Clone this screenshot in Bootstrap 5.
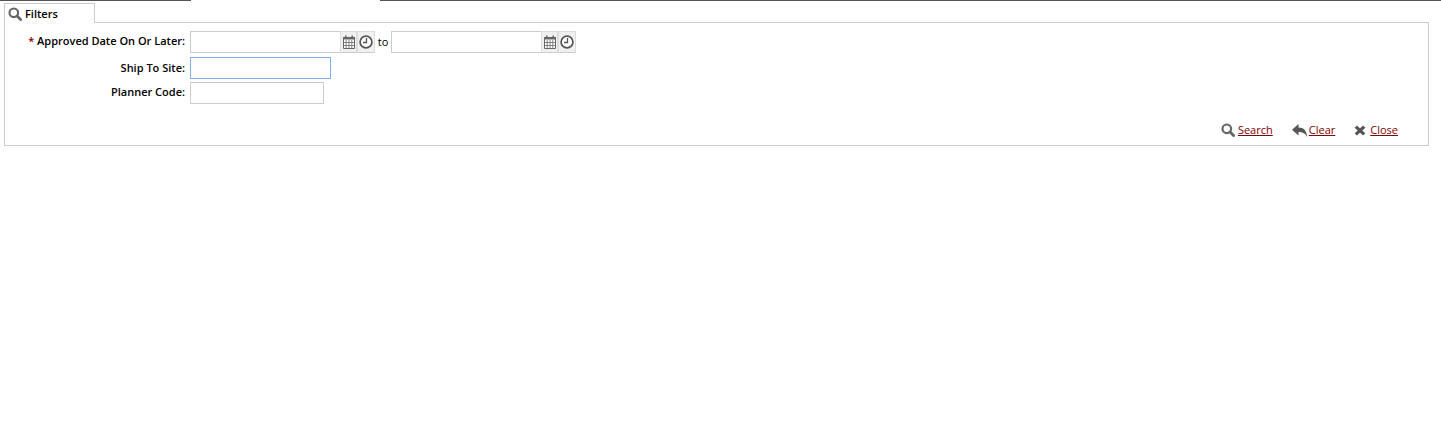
<!DOCTYPE html>
<html lang="en">
<head>
    <meta charset="UTF-8">
    <meta name="viewport" content="width=device-width, initial-scale=1.0">
    <title>Filters</title>
    <link href="https://cdn.jsdelivr.net/npm/bootstrap@5.3.0/dist/css/bootstrap.min.css" rel="stylesheet">
    <style>
        body {
            font-family: "Open Sans", "Liberation Sans", sans-serif;
            font-size: 11px;
            color: #000;
            background: #fff;
        }
        .top-line { height: 3px; }
        .top-seg { height: 1px; background: #555; }
        .top-gap { width: 189px; }
        .top-left { width: 191px; }
        .filter-wrap { margin: 0 12px 0 4px; }
        .filter-tab {
            width: 91px;
            height: 20px;
            border: 1px solid #ccc;
            border-bottom: 0;
            background: #fff;
            font-weight: 600;
            padding-left: 3px;
            margin-bottom: -1px;
            position: relative;
            z-index: 1;
            gap: 3px;
        }
        .tab-title { padding-top: 2px; }
        .filter-panel {
            height: 124px;
            border: 1px solid #ccc;
            padding: 8px 0 0 0;
        }
        .field-row { height: 22px; margin-bottom: 3px; }
        .field-row.first { margin-bottom: 4px; }
        .field-label {
            width: 180px;
            text-align: right;
            font-weight: 600;
            margin-right: 5px;
            padding-bottom: 2px;
            white-space: nowrap;
        }
        .site-row .field-label { padding-bottom: 0; }
        .req { color: #800000; }
        .txt-box {
            height: 22px;
            border: 1px solid #ccc;
            background: #fff;
            padding: 0 3px;
            outline: 0;
            border-radius: 0;
            font-size: 11px;
        }
        .date-box { width: 150px; border-right: 0; }
        .site-box { width: 141px; border-color: #7fb0e3; }
        .planner-box { width: 134px; }
        .pick-btn {
            height: 22px;
            background: #f0f0f0;
            border: 1px solid #ddd;
            border-bottom-color: #ccc;
        }
        .pick-cal { width: 17px; padding-left: 2px; }
        .pick-clock { width: 18px; padding-left: 1px; }
        .to-text { width: 16px; text-align: center; }
        .action-row { margin-top: 18px; padding-right: 30px; }
        .action-row a { color: #800000; text-decoration: underline; }
        .act-item { margin-left: 19px; }
        .gap-search { gap: 3px; }
        .gap-clear { gap: 2px; }
        .gap-close { gap: 4px; }
    </style>
</head>
<body>
<div class="top-line d-flex">
    <div class="top-seg top-left"></div>
    <div class="top-gap"></div>
    <div class="top-seg flex-grow-1"></div>
</div>

<div class="filter-wrap">
    <!-- Tab -->
    <div class="filter-tab d-flex align-items-center">
        <svg width="14" height="14" viewBox="0 0 14 14"><circle cx="5.8" cy="5.8" r="4.3" fill="none" stroke="#666" stroke-width="2.2"/><path d="M9 9l3.6 3.6" stroke="#666" stroke-width="2.8" stroke-linecap="round"/></svg>
        <span class="tab-title">Filters</span>
    </div>

    <!-- Panel -->
    <div class="filter-panel">
        <div class="field-row first d-flex align-items-center">
            <div class="field-label"><span class="req">*</span> Approved Date On Or Later:</div>
            <input type="text" class="txt-box date-box">
            <div class="pick-btn pick-cal d-flex align-items-center">
                <svg width="12" height="14" viewBox="0 0 12 14"><path d="M.5 2.5h11v11H.5z" fill="#fff" stroke="#666"/><path d="M0 2h12v2.5H0z" fill="#666"/><path d="M2.8 .5v3M9.2 .5v3" stroke="#666" stroke-width="1.5"/><path d="M3.2 5v8M6 5v8M8.8 5v8M1 7.5h10M1 10.5h10" stroke="#777" stroke-width=".9"/></svg>
            </div>
            <div class="pick-btn pick-clock d-flex align-items-center">
                <svg width="14" height="14" viewBox="0 0 14 14"><circle cx="7" cy="7" r="5.9" fill="#fff" stroke="#555" stroke-width="1.7"/><path d="M7.5 3v4.5H4" fill="none" stroke="#555" stroke-width="1.3"/></svg>
            </div>
            <div class="to-text">to</div>
            <input type="text" class="txt-box date-box">
            <div class="pick-btn pick-cal d-flex align-items-center">
                <svg width="12" height="14" viewBox="0 0 12 14"><path d="M.5 2.5h11v11H.5z" fill="#fff" stroke="#666"/><path d="M0 2h12v2.5H0z" fill="#666"/><path d="M2.8 .5v3M9.2 .5v3" stroke="#666" stroke-width="1.5"/><path d="M3.2 5v8M6 5v8M8.8 5v8M1 7.5h10M1 10.5h10" stroke="#777" stroke-width=".9"/></svg>
            </div>
            <div class="pick-btn pick-clock d-flex align-items-center">
                <svg width="14" height="14" viewBox="0 0 14 14"><circle cx="7" cy="7" r="5.9" fill="#fff" stroke="#555" stroke-width="1.7"/><path d="M7.5 3v4.5H4" fill="none" stroke="#555" stroke-width="1.3"/></svg>
            </div>
        </div>
        <div class="field-row site-row d-flex align-items-center">
            <div class="field-label">Ship To Site:</div>
            <input type="text" class="txt-box site-box">
        </div>
        <div class="field-row d-flex align-items-center">
            <div class="field-label">Planner Code:</div>
            <input type="text" class="txt-box planner-box">
        </div>

        <!-- Actions -->
        <div class="action-row d-flex justify-content-end align-items-center">
            <div class="act-item gap-search d-flex align-items-center">
                <svg width="14" height="14" viewBox="0 0 14 14"><circle cx="5.8" cy="5.8" r="4.3" fill="none" stroke="#666" stroke-width="2.2"/><path d="M9 9l3.6 3.6" stroke="#666" stroke-width="2.8" stroke-linecap="round"/></svg>
                <a href="#">Search</a>
            </div>
            <div class="act-item gap-clear d-flex align-items-center">
                <svg width="15" height="13" viewBox="0 0 15 13"><path d="M6.5 0v3.4C11.5 3.4 15 6.4 15 13c-1.6-3.6-4.2-5-8.5-5v3.6L0 5.8z" fill="#555"/></svg>
                <a href="#">Clear</a>
            </div>
            <div class="act-item gap-close d-flex align-items-center">
                <svg width="12" height="11" viewBox="0 0 12 11"><path d="M1.8 1.6l8.4 7.8" stroke="#555" stroke-width="3.2"/><path d="M10.2 1.6L1.8 9.4" stroke="#555" stroke-width="3.2"/></svg>
                <a href="#">Close</a>
            </div>
        </div>
    </div>
</div>

<script src="https://cdn.jsdelivr.net/npm/bootstrap@5.3.0/dist/js/bootstrap.bundle.min.js"></script>
</body>
</html>
